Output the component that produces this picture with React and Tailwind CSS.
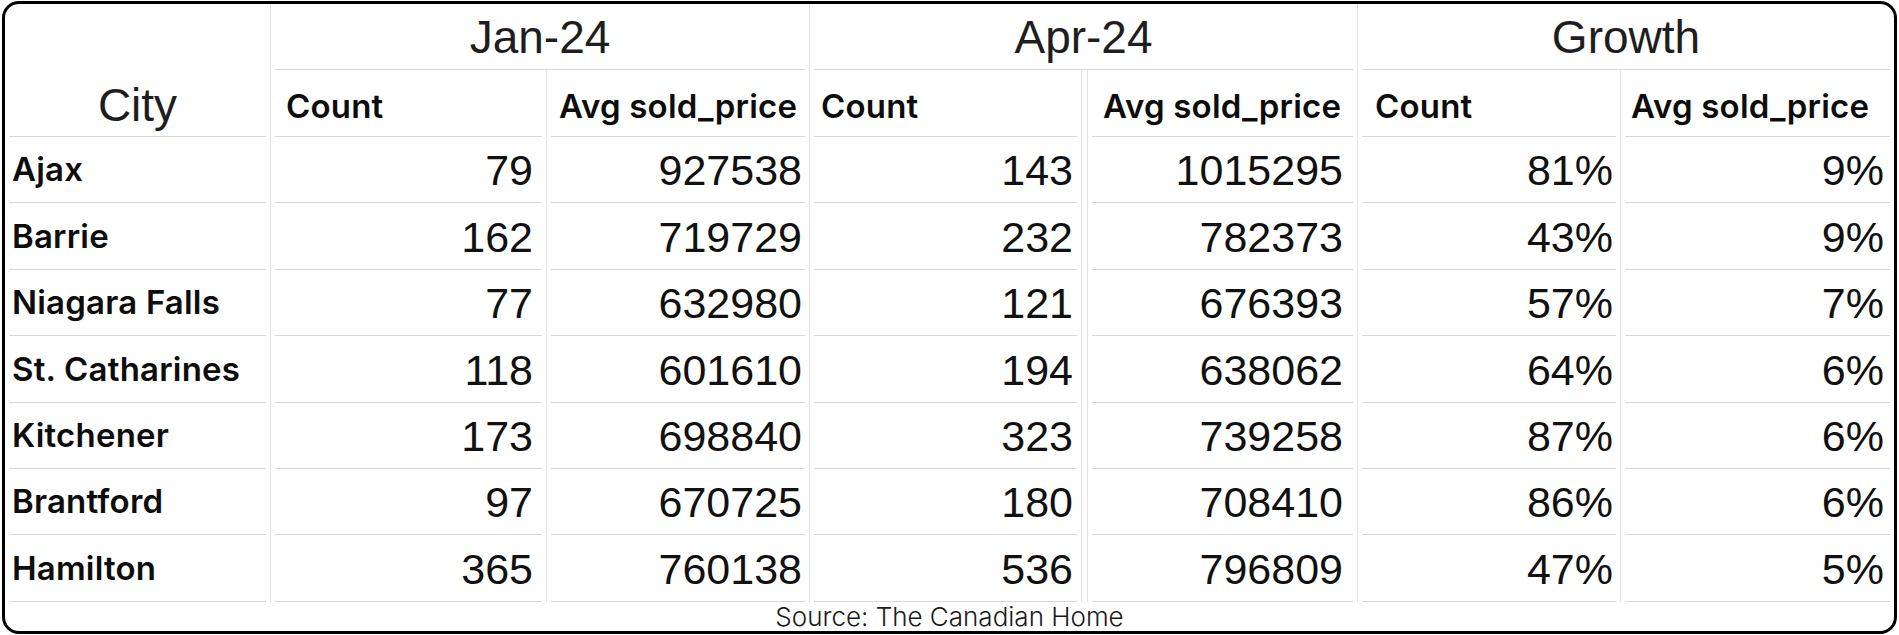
import React from 'react';

const rows = [
  ['Ajax', '79', '927538', '143', '1015295', '81%', '9%'],
  ['Barrie', '162', '719729', '232', '782373', '43%', '9%'],
  ['Niagara Falls', '77', '632980', '121', '676393', '57%', '7%'],
  ['St. Catharines', '118', '601610', '194', '638062', '64%', '6%'],
  ['Kitchener', '173', '698840', '323', '739258', '87%', '6%'],
  ['Brantford', '97', '670725', '180', '708410', '86%', '6%'],
  ['Hamilton', '365', '760138', '536', '796809', '47%', '5%'],
];

// per column: outer cell classes, label padding, number padding
const cols = [
  { cell: 'border-r border-[#e3e3e3]', label: 'pl-[3px]', num: '' },
  { cell: 'border-r border-[#e3e3e3]', label: 'pl-[11px]', num: 'pr-[9px]' },
  { cell: 'border-r border-[#e3e3e3]', label: 'pl-[8px]', num: 'pr-[3px]' },
  { cell: 'border-r border-[#e3e3e3]', label: 'pl-[7px]', num: 'pr-[4px]' },
  { cell: 'ml-[5px] border-l border-r border-[#e3e3e3]', label: 'pl-[11px]', num: 'pr-[10px]' },
  { cell: 'border-r border-[#e3e3e3]', label: 'pl-[13px]', num: 'pr-[3px]' },
  { cell: '', label: 'pl-[6px]', num: 'pr-[6px]' },
];

const labelFont = "font-['Inter',sans-serif] font-semibold text-[33px] text-[#0d0d0d] tracking-[0.2px]";
const numFont = "font-['Liberation_Sans',Arial,sans-serif] text-[43px] text-[#111]";
const groupFont = "font-['Liberation_Sans',Arial,sans-serif] text-[46px] text-[#1e1e1e]";

function Cell({ className = '', inner = '', children }) {
  return (
    <div className={className}>
      <div className={`mx-[4px] h-full flex items-center border-b border-[#d8d8d8] ${inner}`}>{children}</div>
    </div>
  );
}

export default function App() {
  return (
    <div className="w-[1899px] h-[635px] bg-white px-[2px] pt-[1px] pb-[1px]">
      <div className="h-full flex flex-col border-[3px] border-black rounded-[17px] bg-white overflow-hidden">
        <div className="grid grid-cols-[266px_276px_263px_272px_276px_263px_1fr] grid-rows-[66px_67px_repeat(7,66.4px)]">
          {/* header row 1 */}
          <div className="row-span-2 border-r border-[#e3e3e3]">
            <div className="mx-[4px] h-full flex flex-col justify-end border-b border-[#d8d8d8]">
              <div className={`h-[67px] pt-[6px] flex items-center justify-center ${groupFont}`}>City</div>
            </div>
          </div>
          <Cell className="col-span-2 border-r border-[#e3e3e3]" inner={`justify-center pt-[2px] ${groupFont}`}>Jan-24</Cell>
          <Cell className="col-span-2 border-r border-[#e3e3e3]" inner={`justify-center pt-[2px] ${groupFont}`}>Apr-24</Cell>
          <Cell className="col-span-2" inner={`justify-center pt-[2px] ${groupFont}`}>Growth</Cell>

          {/* header row 2 */}
          {['Count', 'Avg sold_price', 'Count', 'Avg sold_price', 'Count', 'Avg sold_price'].map((t, i) => (
            <Cell key={i} className={cols[i + 1].cell} inner={`pt-[7px] ${cols[i + 1].label} ${labelFont}`}>{t}</Cell>
          ))}

          {/* data */}
          {rows.map((r) =>
            r.map((v, i) =>
              i === 0 ? (
                <Cell key={r[0] + i} className={cols[0].cell} inner={`pt-[1px] ${cols[0].label} ${labelFont}`}>{v}</Cell>
              ) : (
                <Cell key={r[0] + i} className={cols[i].cell} inner={`pt-[2px] justify-end ${cols[i].num} ${numFont}`}>{v}</Cell>
              )
            )
          )}
        </div>
        <div className="flex-1 flex items-center justify-center font-['Inter',sans-serif] font-light text-[26px] text-[#1a1a1a] leading-none pt-[1px]">
          Source: The Canadian Home
        </div>
      </div>
    </div>
  );
}
